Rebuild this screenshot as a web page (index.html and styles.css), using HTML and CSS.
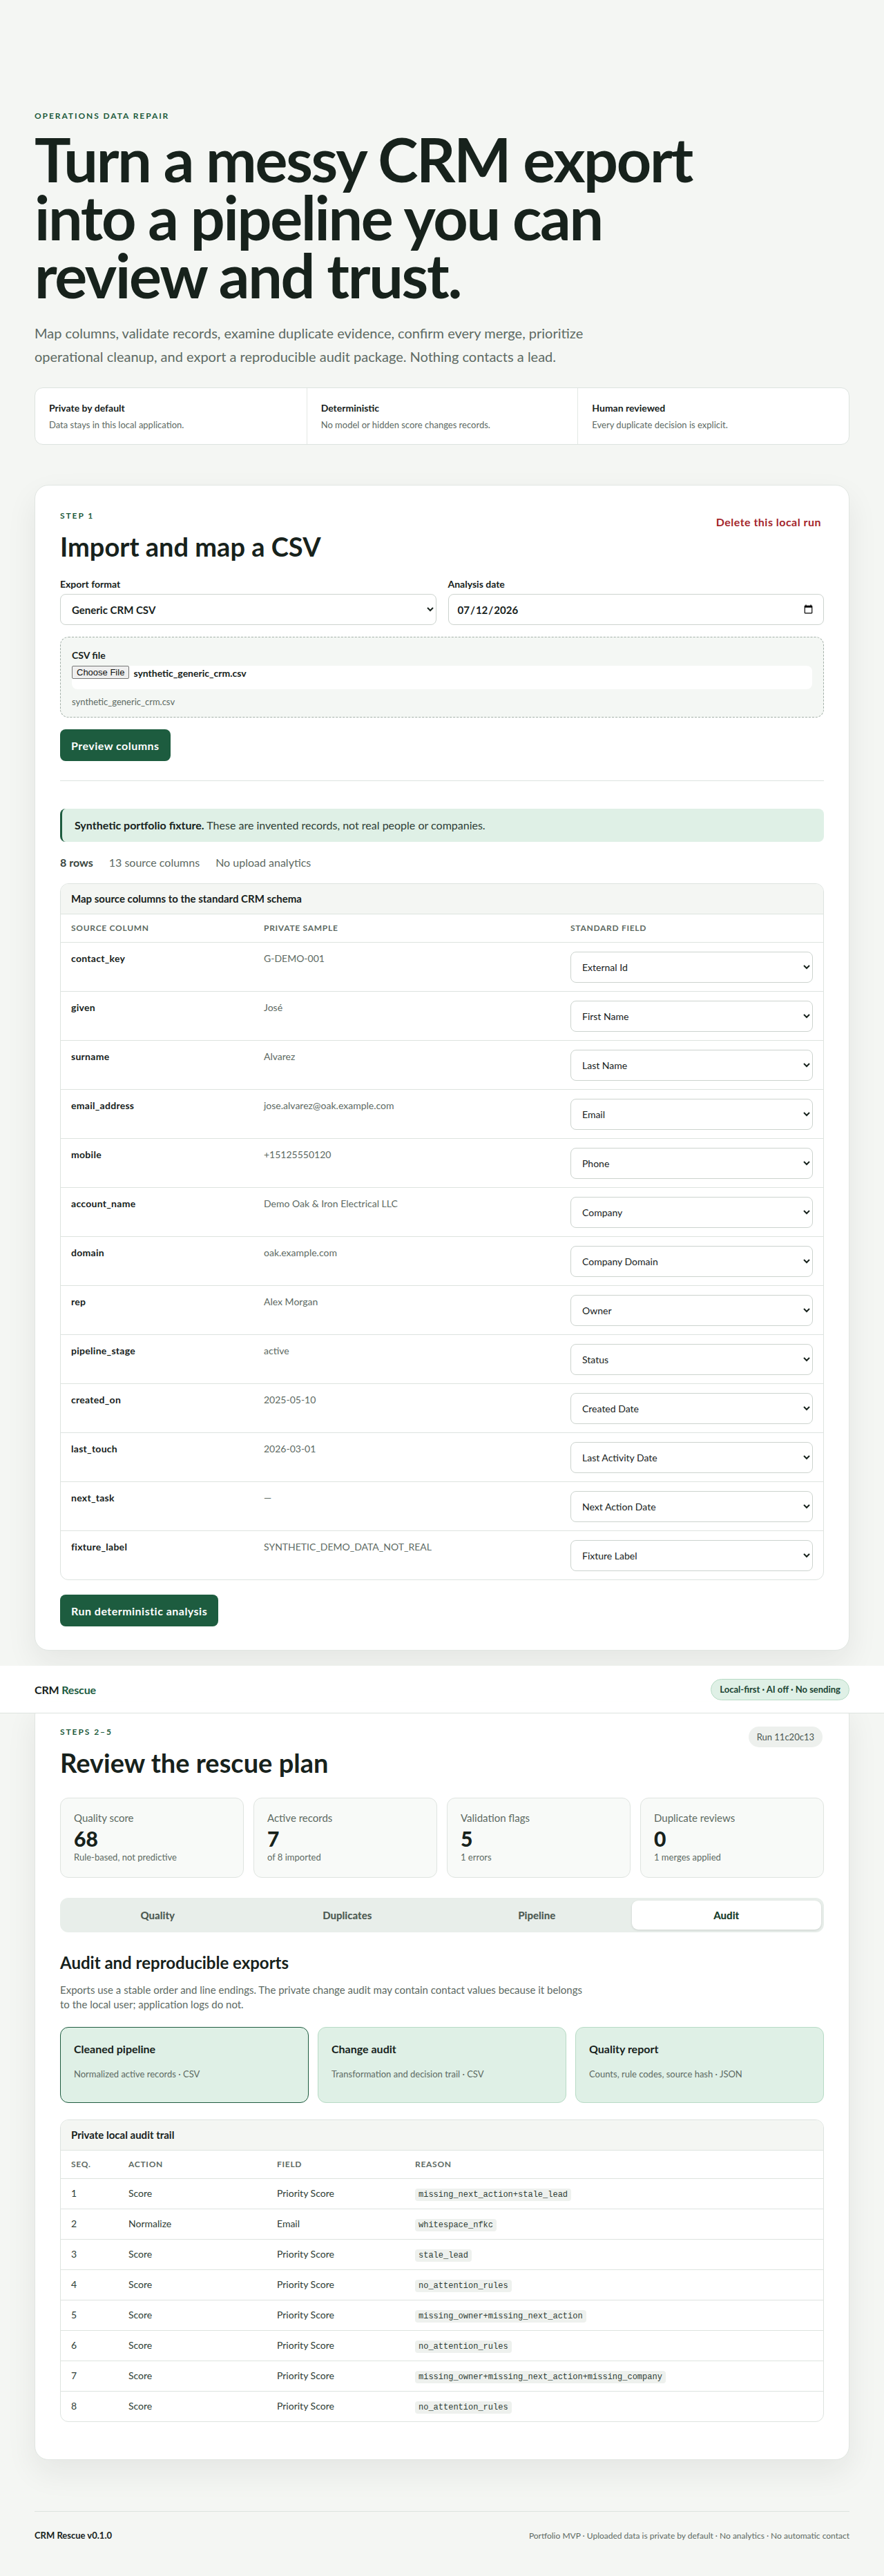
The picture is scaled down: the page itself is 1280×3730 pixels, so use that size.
FILE: index.html
```html
<!DOCTYPE html>
<html lang="en">
<head>
    <meta charset="UTF-8">
    <meta name="viewport" content="width=device-width, initial-scale=1.0">
    <title>CRM Rescue</title>
    <link rel="stylesheet" href="styles.css">
</head>
<body>
    <div class="page">
        <header class="hero">
            <p class="eyebrow">Operations data repair</p>
            <h1>Turn a messy CRM export into a pipeline you can review and trust.</h1>
            <p class="lead">Map columns, validate records, examine duplicate evidence, confirm every merge, prioritize operational cleanup, and export a reproducible audit package. Nothing contacts a lead.</p>
            <div class="promises">
                <div class="promise">
                    <strong>Private by default</strong>
                    <span>Data stays in this local application.</span>
                </div>
                <div class="promise">
                    <strong>Deterministic</strong>
                    <span>No model or hidden score changes records.</span>
                </div>
                <div class="promise">
                    <strong>Human reviewed</strong>
                    <span>Every duplicate decision is explicit.</span>
                </div>
            </div>
        </header>

        <section class="panel">
            <div class="panel-head">
                <div>
                    <p class="eyebrow">Step 1</p>
                    <h2>Import and map a CSV</h2>
                </div>
                <button class="danger-link">Delete this local run</button>
            </div>

            <div class="field-grid">
                <label class="field">
                    <span class="field-label">Export format</span>
                    <select><option>Generic CRM CSV</option></select>
                </label>
                <label class="field">
                    <span class="field-label">Analysis date</span>
                    <input type="date" value="2026-07-12">
                </label>
            </div>

            <div class="dropzone">
                <span class="field-label">CSV file</span>
                <div class="file-input">
                    <span class="file-btn">Choose File</span>
                    <span class="file-name">synthetic_generic_crm.csv</span>
                </div>
                <small>synthetic_generic_crm.csv</small>
            </div>

            <button class="primary">Preview columns</button>

            <hr class="divider">

            <div class="notice"><strong>Synthetic portfolio fixture.</strong> These are invented records, not real people or companies.</div>

            <div class="meta">
                <strong>8 rows</strong>
                <span>13 source columns</span>
                <span>No upload analytics</span>
            </div>

            <div class="table-box">
                <div class="table-title">Map source columns to the standard CRM schema</div>
                <table class="map-table">
                    <thead>
                        <tr><th class="col-source">Source column</th><th class="col-sample">Private sample</th><th>Standard field</th></tr>
                    </thead>
                    <tbody>
                        <tr><td class="src">contact_key</td><td class="sample">G-DEMO-001</td><td><select><option>External Id</option></select></td></tr>
                        <tr><td class="src">given</td><td class="sample">José</td><td><select><option>First Name</option></select></td></tr>
                        <tr><td class="src">surname</td><td class="sample">Alvarez</td><td><select><option>Last Name</option></select></td></tr>
                        <tr><td class="src">email_address</td><td class="sample">jose.alvarez@oak.example.com</td><td><select><option>Email</option></select></td></tr>
                        <tr><td class="src">mobile</td><td class="sample">+15125550120</td><td><select><option>Phone</option></select></td></tr>
                        <tr><td class="src">account_name</td><td class="sample">Demo Oak &amp; Iron Electrical LLC</td><td><select><option>Company</option></select></td></tr>
                        <tr><td class="src">domain</td><td class="sample">oak.example.com</td><td><select><option>Company Domain</option></select></td></tr>
                        <tr><td class="src">rep</td><td class="sample">Alex Morgan</td><td><select><option>Owner</option></select></td></tr>
                        <tr><td class="src">pipeline_stage</td><td class="sample">active</td><td><select><option>Status</option></select></td></tr>
                        <tr><td class="src">created_on</td><td class="sample">2025-05-10</td><td><select><option>Created Date</option></select></td></tr>
                        <tr><td class="src">last_touch</td><td class="sample">2026-03-01</td><td><select><option>Last Activity Date</option></select></td></tr>
                        <tr><td class="src">next_task</td><td class="sample">—</td><td><select><option>Next Action Date</option></select></td></tr>
                        <tr><td class="src">fixture_label</td><td class="sample">SYNTHETIC_DEMO_DATA_NOT_REAL</td><td><select><option>Fixture Label</option></select></td></tr>
                    </tbody>
                </table>
            </div>

            <button class="primary run-btn">Run deterministic analysis</button>
        </section>
    </div>

    <div class="topbar">
        <div class="topbar-inner">
            <span class="brand">CRM <span>Rescue</span></span>
            <span class="status-pill">Local-first · AI off · No sending</span>
        </div>
    </div>

    <div class="page">
        <section class="panel panel-review">
            <div class="panel-head">
                <div>
                    <p class="eyebrow">Steps 2–5</p>
                    <h2>Review the rescue plan</h2>
                </div>
                <span class="run-pill">Run 11c20c13</span>
            </div>

            <div class="stats">
                <div class="stat">
                    <span class="stat-label">Quality score</span>
                    <strong>68</strong>
                    <small>Rule-based, not predictive</small>
                </div>
                <div class="stat">
                    <span class="stat-label">Active records</span>
                    <strong>7</strong>
                    <small>of 8 imported</small>
                </div>
                <div class="stat">
                    <span class="stat-label">Validation flags</span>
                    <strong>5</strong>
                    <small>1 errors</small>
                </div>
                <div class="stat">
                    <span class="stat-label">Duplicate reviews</span>
                    <strong>0</strong>
                    <small>1 merges applied</small>
                </div>
            </div>

            <div class="tabs">
                <button class="tab">Quality</button>
                <button class="tab">Duplicates</button>
                <button class="tab">Pipeline</button>
                <button class="tab active">Audit</button>
            </div>

            <h3>Audit and reproducible exports</h3>
            <p class="section-text">Exports use a stable order and line endings. The private change audit may contain contact values because it belongs to the local user; application logs do not.</p>

            <div class="exports">
                <div class="export selected">
                    <strong>Cleaned pipeline</strong>
                    <span>Normalized active records · CSV</span>
                </div>
                <div class="export">
                    <strong>Change audit</strong>
                    <span>Transformation and decision trail · CSV</span>
                </div>
                <div class="export">
                    <strong>Quality report</strong>
                    <span>Counts, rule codes, source hash · JSON</span>
                </div>
            </div>

            <div class="table-box audit-box">
                <div class="table-title">Private local audit trail</div>
                <table class="audit-table">
                    <thead>
                        <tr><th class="col-seq">Seq.</th><th class="col-action">Action</th><th class="col-field">Field</th><th>Reason</th></tr>
                    </thead>
                    <tbody>
                        <tr><td>1</td><td>Score</td><td>Priority Score</td><td><code>missing_next_action+stale_lead</code></td></tr>
                        <tr><td>2</td><td>Normalize</td><td>Email</td><td><code>whitespace_nfkc</code></td></tr>
                        <tr><td>3</td><td>Score</td><td>Priority Score</td><td><code>stale_lead</code></td></tr>
                        <tr><td>4</td><td>Score</td><td>Priority Score</td><td><code>no_attention_rules</code></td></tr>
                        <tr><td>5</td><td>Score</td><td>Priority Score</td><td><code>missing_owner+missing_next_action</code></td></tr>
                        <tr><td>6</td><td>Score</td><td>Priority Score</td><td><code>no_attention_rules</code></td></tr>
                        <tr><td>7</td><td>Score</td><td>Priority Score</td><td><code>missing_owner+missing_next_action+missing_company</code></td></tr>
                        <tr><td>8</td><td>Score</td><td>Priority Score</td><td><code>no_attention_rules</code></td></tr>
                    </tbody>
                </table>
            </div>
        </section>

        <footer class="footer">
            <strong>CRM Rescue v0.1.0</strong>
            <span>Portfolio MVP · Uploaded data is private by default · No analytics · No automatic contact</span>
        </footer>
    </div>
</body>
</html>
```

FILE: styles.css
```css
/* CRM Rescue - local review app */
* {
    box-sizing: border-box;
}

body {
    margin: 0;
    font-family: Lato, 'Open Sans', sans-serif;
    background-color: #f4f6f3;
    color: #17221c;
}

.page {
    max-width: 1180px;
    margin: 0 auto;
}

/* hero */
.hero {
    padding-top: 160px;
}

.eyebrow {
    margin: 0;
    font-size: 12px;
    line-height: 16px;
    font-weight: 700;
    letter-spacing: 0.16em;
    text-transform: uppercase;
    color: #1f5c3e;
}

.hero h1 {
    margin: 12px 0 0;
    max-width: 1000px;
    font-size: 88px;
    line-height: 84px;
    font-weight: 700;
    letter-spacing: -0.026em;
    color: #17221c;
}

.lead {
    margin: 25px 0 0;
    max-width: 830px;
    font-size: 20px;
    line-height: 34px;
    color: #5d6a63;
}

.promises {
    display: grid;
    grid-template-columns: repeat(3, 1fr);
    margin-top: 28px;
    background: #fff;
    border: 1px solid #dde3df;
    border-radius: 12px;
    overflow: hidden;
}

.promise {
    padding: 20px 20px 19px;
    border-left: 1px solid #e3e8e4;
}

.promise:first-child {
    border-left: none;
}

.promise strong {
    display: block;
    font-size: 14px;
    line-height: 18px;
    font-weight: 700;
}

.promise span {
    display: block;
    margin-top: 6px;
    font-size: 13px;
    line-height: 18px;
    color: #5d6a63;
}

/* panels */
.panel {
    margin-top: 58px;
    background: #fff;
    border: 1px solid #e1e6e2;
    border-radius: 20px;
    padding: 36px 36px 34px;
    box-shadow: 0 18px 45px rgba(23, 34, 28, 0.07);
}

.panel-head {
    display: flex;
    justify-content: space-between;
    align-items: flex-start;
}

.panel h2 {
    margin: 14px 0 0;
    font-size: 38px;
    line-height: 44px;
    font-weight: 700;
    letter-spacing: 0;
}

.danger-link {
    margin-top: 3px;
    padding: 4px 4px;
    border: none;
    background: none;
    font-family: inherit;
    font-size: 16px;
    font-weight: 700;
    letter-spacing: 0.03em;
    color: #a4262c;
    cursor: pointer;
}

.field-grid {
    display: grid;
    grid-template-columns: 1fr 1fr;
    gap: 17px;
    margin-top: 24px;
}

.field {
    display: flex;
    flex-direction: column;
    gap: 5px;
}

.field-label {
    font-size: 14px;
    line-height: 18px;
    font-weight: 700;
}

select,
input[type="date"] {
    height: 45px;
    padding: 0 12px;
    font-family: inherit;
    font-size: 15px;
    font-weight: 700;
    color: #17221c;
    background-color: #fff;
    border: 1px solid #ccd3ce;
    border-radius: 8px;
}

.dropzone {
    display: flex;
    flex-direction: column;
    margin-top: 17px;
    padding: 17px 16px 14px;
    background: #f4f7f4;
    border: 1px dashed #a3b0a8;
    border-radius: 12px;
}

.file-input {
    display: flex;
    align-items: flex-start;
    gap: 6px;
    margin-top: 6px;
    height: 34px;
    background: #fff;
    border-radius: 8px;
}

.file-btn {
    padding: 1px 6px;
    font-family: 'Liberation Sans', Arial, sans-serif;
    font-size: 13px;
    color: #111;
    background: #efefef;
    border: 1px solid #767676;
    border-radius: 2px;
}

.file-name {
    padding-top: 2px;
    font-size: 14px;
    font-weight: 700;
}

.dropzone small {
    margin-top: 10px;
    font-size: 13px;
    color: #5d6a63;
}

.primary {
    margin-top: 17px;
    height: 46px;
    padding: 0 16px;
    border: none;
    border-radius: 8px;
    background-color: #1d5c3f;
    color: #fff;
    font-family: inherit;
    font-size: 16px;
    font-weight: 700;
    letter-spacing: 0.03em;
    cursor: pointer;
}

.divider {
    margin: 28px 0 0;
    border: none;
    border-top: 1px solid #dde3df;
}

.notice {
    margin-top: 40px;
    padding: 13px 18px;
    background: #dff0e6;
    border-left: 3px solid #1d5c3f;
    border-radius: 8px;
    font-size: 16px;
    line-height: 22px;
    color: #2e3d35;
}

.notice strong {
    color: #17221c;
}

.meta {
    display: flex;
    gap: 23px;
    margin-top: 20px;
    font-size: 16px;
    line-height: 20px;
    color: #5d6a63;
}

.meta strong {
    color: #3a4640;
}

/* tables */
.table-box {
    margin-top: 20px;
    border: 1px solid #dde3df;
    border-radius: 12px;
    overflow: hidden;
}

.table-title {
    padding: 12px 15px;
    background: #f4f6f3;
    border-bottom: 1px solid #dde3df;
    font-size: 15px;
    line-height: 19px;
    font-weight: 700;
}

table {
    width: 100%;
    border-collapse: collapse;
}

th {
    padding: 12px 15px;
    text-align: left;
    font-size: 12px;
    line-height: 16px;
    font-weight: 700;
    letter-spacing: 0.06em;
    text-transform: uppercase;
    color: #5d6a63;
    border-bottom: 1px solid #dde3df;
}

.map-table td {
    padding: 13px 15px 12px;
    vertical-align: top;
    font-size: 14px;
    line-height: 20px;
    border-bottom: 1px solid #dde3df;
}

.map-table tr:last-child td {
    border-bottom: none;
}

.col-source {
    width: 279px;
}

.col-sample {
    width: 444px;
}

.map-table .src {
    font-weight: 700;
    letter-spacing: 0.02em;
}

.map-table .sample {
    color: #5d6a63;
}

.map-table select {
    width: 100%;
    font-size: 14px;
    font-weight: 400;
}

.run-btn {
    margin-top: 21px;
}

.topbar {
    position: relative;
    z-index: 2;
    margin-top: 22px;
    background: rgba(255, 255, 255, 0.97);
    border-bottom: 1px solid #dde3df;
}

.topbar-inner {
    max-width: 1180px;
    height: 68px;
    margin: 0 auto;
    display: flex;
    justify-content: space-between;
    align-items: center;
}

.brand {
    font-size: 16px;
    font-weight: 700;
    letter-spacing: -0.01em;
}

.brand span {
    color: #1d5c3f;
}

.status-pill {
    padding: 5px 12px;
    font-size: 13px;
    line-height: 19px;
    font-weight: 700;
    color: #1b4332;
    background: #dff0e6;
    border: 1px solid #b7dbc5;
    border-radius: 999px;
}

.panel-review {
    position: relative;
    margin-top: -18px;
    padding-bottom: 54px;
}

.run-pill {
    margin-top: 0;
    margin-right: 2px;
    padding: 6px 12px;
    font-size: 13px;
    line-height: 18px;
    color: #4c5852;
    background: #edf0ed;
    border-radius: 999px;
}

.stats {
    display: grid;
    grid-template-columns: repeat(4, 1fr);
    gap: 14px;
    margin-top: 29px;
}

.stat {
    display: flex;
    flex-direction: column;
    height: 116px;
    padding: 18px 19px;
    background: #f8faf8;
    border: 1px solid #dfe4e0;
    border-radius: 12px;
}

.stat-label {
    font-size: 15px;
    line-height: 20px;
    color: #5d6a63;
}

.stat strong {
    margin-top: 2px;
    font-size: 30px;
    line-height: 36px;
    font-weight: 900;
}

.stat small {
    font-size: 13px;
    line-height: 18px;
    color: #5d6a63;
}

.tabs {
    display: grid;
    grid-template-columns: repeat(4, 1fr);
    margin-top: 29px;
    padding: 4px;
    background: #e8eeea;
    border-radius: 12px;
}

.tab {
    height: 42px;
    border: none;
    background: none;
    border-radius: 9px;
    font-family: inherit;
    font-size: 15px;
    font-weight: 900;
    color: #4f5c55;
    cursor: pointer;
}

.tab.active {
    background: #fff;
    color: #173d2a;
    box-shadow: 0 1px 3px rgba(23, 34, 28, 0.14);
}

.panel h3 {
    margin: 29px 0 0;
    font-size: 24px;
    line-height: 30px;
    font-weight: 700;
    letter-spacing: 0;
}

.section-text {
    margin: 14px 0 0;
    max-width: 760px;
    font-size: 15px;
    line-height: 21px;
    color: #5d6a63;
}

.exports {
    display: grid;
    grid-template-columns: repeat(3, 1fr);
    gap: 13px;
    margin-top: 22px;
}

.export {
    height: 110px;
    padding: 20px 19px;
    background: #dff0e6;
    border: 1px solid #b7dbc5;
    border-radius: 12px;
}

.export.selected {
    border-color: #1d5c3f;
}

.export strong {
    display: block;
    font-size: 16px;
    line-height: 22px;
    font-weight: 700;
}

.export span {
    display: block;
    margin-top: 16px;
    font-size: 13px;
    line-height: 18px;
    color: #5d6a63;
}

.audit-box {
    margin-top: 24px;
}

.audit-table td {
    padding: 11px 15px 12px;
    font-size: 14px;
    line-height: 20px;
    color: #2e3d35;
    border-bottom: 1px solid #dde3df;
}

.audit-table tr:last-child td {
    border-bottom: none;
}

.col-seq {
    width: 83px;
}

.col-action {
    width: 215px;
}

.col-field {
    width: 200px;
}

code {
    padding: 2px 5px;
    font-family: 'Liberation Mono', 'DejaVu Sans Mono', monospace;
    font-size: 12px;
    line-height: 16px;
    color: #2e3d35;
    background: #eef1ee;
    border-radius: 4px;
}

/* footer */
.footer {
    display: flex;
    justify-content: space-between;
    align-items: center;
    margin-top: 74px;
    padding: 26px 0 50px;
    border-top: 1px solid #dde3df;
    font-size: 12px;
    color: #5d6a63;
}

.footer strong {
    font-size: 13px;
    color: #17221c;
}
```
